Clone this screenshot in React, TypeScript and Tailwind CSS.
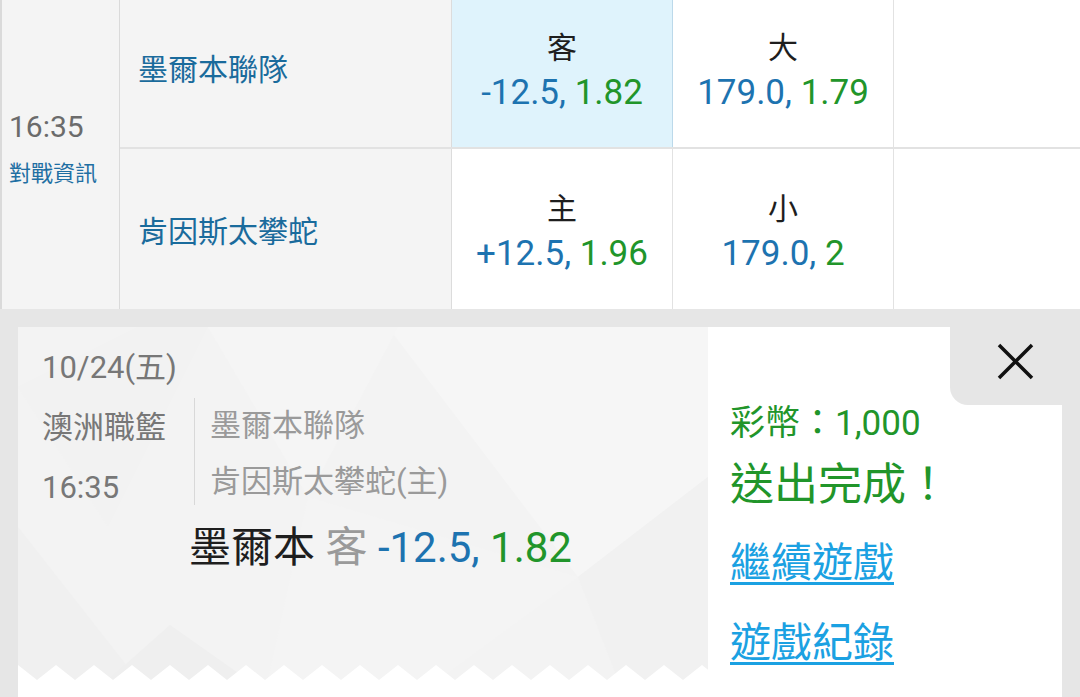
import React from "react";

type OddsCell = {
  label: string;
  line: string;
  odds: string;
  selected?: boolean;
};

type MatchRow = {
  team: string;
  cells: OddsCell[];
};

const rows: MatchRow[] = [
  {
    team: "墨爾本聯隊",
    cells: [
      { label: "客", line: "-12.5,", odds: "1.82", selected: true },
      { label: "大", line: "179.0,", odds: "1.79" },
    ],
  },
  {
    team: "肯因斯太攀蛇",
    cells: [
      { label: "主", line: "+12.5,", odds: "1.96" },
      { label: "小", line: "179.0,", odds: "2" },
    ],
  },
];

// zigzag edge along the bottom of the ticket
const zigzag = (() => {
  const w = 690;
  const h = 353;
  let d = `M0,${h} L0,${h - 15}`;
  for (let x = 0; x < w; x += 38) {
    d += ` L${x + 19},${h} L${x + 38},${h - 15}`;
  }
  d += ` L${w},${h} Z`;
  return d;
})();

const TicketBackground: React.FC = () => (
  <svg
    className="absolute inset-0"
    width="690"
    height="353"
    viewBox="0 0 690 353"
  >
    <rect width="690" height="353" fill="#f3f3f3" />
    <polygon points="370,0 690,0 690,150 560,250" fill="#f6f6f6" />
    <polygon points="190,0 380,0 290,170" fill="#f5f5f5" />
    <polygon points="0,60 120,0 190,0 90,200" fill="#f2f2f2" />
    <polygon points="0,200 120,353 0,353" fill="#f0f0f0" />
    <polygon points="90,353 152,298 230,353" fill="#efefef" />
    <polygon points="290,170 560,250 420,353 250,353" fill="#f4f4f4" />
    <polygon points="560,250 690,150 690,353 600,353" fill="#f1f1f1" />
    <path d={zigzag} fill="#ffffff" />
  </svg>
);

const App: React.FC = () => {
  return (
    <div className="w-[1080px] h-[697px] overflow-hidden bg-[#e6e6e6] font-['Roboto','Noto_Sans_CJK_TC',sans-serif]">
      {/* odds table (scrolled slightly) */}
      <div className="h-[309px] overflow-hidden">
        <div className="flex h-[321px] -mt-[12px]">
          <div className="w-[120px] shrink-0 bg-[#f4f4f4] border-l-2 border-r border-[#dadada] flex flex-col justify-center pl-[7px]">
            <div className="text-[30px] leading-[36px] text-[#6b6b6b]">16:35</div>
            <div className="mt-[14px] text-[22px] leading-[30px] text-[#1f6fa3]">對戰資訊</div>
          </div>

          <div className="flex-1 flex flex-col">
            {rows.map((row, i) => (
              <div
                key={row.team}
                className={`flex ${i === 0 ? "h-[161px] border-b-2 border-[#e2e2e2]" : "h-[160px]"}`}
              >
                <div className="w-[332px] shrink-0 bg-[#f4f4f4] border-r border-[#dcdcdc] flex items-center pl-[18px] pt-[4px] text-[30px] text-[#1a6b9c]">
                  {row.team}
                </div>
                {row.cells.map((c) => (
                  <div
                    key={c.label}
                    className={`w-[221px] shrink-0 flex flex-col items-center justify-center pt-[8px] border-r ${
                      c.selected ? "bg-[#dff3fc] border-[#bcd9ea]" : "bg-white border-[#e2e2e2]"
                    }`}
                  >
                    <div className="text-[30px] leading-[36px] text-[#1e1e1e]">{c.label}</div>
                    <div className="mt-[6px] text-[35px] leading-[42px]">
                      <span className="text-[#1d73b0]">{c.line}</span>{" "}
                      <span className="text-[#21952a]">{c.odds}</span>
                    </div>
                  </div>
                ))}
                <div className="flex-1 bg-white" />
              </div>
            ))}
          </div>
        </div>
      </div>

      {/* bet receipt */}
      <div className="pt-[18px] px-[18px]">
        <div className="flex h-[370px] bg-white">
          <div className="relative w-[690px] h-[353px] shrink-0 overflow-hidden">
            <TicketBackground />
            <div className="relative pl-[24px] pt-[21px]">
              <div className="text-[31px] leading-[40px] text-[#777]">10/24(五)</div>
              <div className="mt-[10px] flex items-start">
                <div className="w-[152px] pt-[10px] flex flex-col gap-[20px] text-[31px] leading-[40px] text-[#777]">
                  <span>澳洲職籃</span>
                  <span>16:35</span>
                </div>
                <div className="border-l border-[#d8d8d8] pl-[15px] pt-[8px] pb-[3px] flex flex-col gap-[16px] text-[31px] leading-[40px] text-[#9a9a9a]">
                  <span>墨爾本聯隊</span>
                  <span>肯因斯太攀蛇(主)</span>
                </div>
              </div>
              <div className="mt-[15px] pl-[147px] text-[42px] leading-[50px] whitespace-nowrap">
                <span className="text-[#1e1e1e]">墨爾本</span>{" "}
                <span className="text-[#9a9a9a]">客</span>{" "}
                <span className="text-[#1d73b0]">-12.5,</span>{" "}
                <span className="text-[#21952a]">1.82</span>
              </div>
            </div>
          </div>

          <div className="flex-1 flex flex-col">
            <div className="flex justify-end">
              <button className="w-[112px] h-[78px] bg-[#e6e6e6] rounded-bl-[18px] pl-[47px] pt-[16px] flex items-start">
                <svg width="37" height="37" viewBox="0 0 37 37">
                  <path d="M2 2 L35 35 M35 2 L2 35" stroke="#111" strokeWidth="3.5" />
                </svg>
              </button>
            </div>
            <div className="pl-[22px]">
              <div className="text-[35px] leading-[38px] text-[#21952a]">彩幣：1,000</div>
              <div className="mt-[14px] text-[44px] leading-[56px] text-[#21952a]">送出完成！</div>
              <div className="mt-[24px] text-[41px] leading-[52px] text-[#1ba1e2] underline decoration-[3px] underline-offset-[5px]">
                繼續遊戲
              </div>
              <div className="mt-[28px] text-[41px] leading-[52px] text-[#1ba1e2] underline decoration-[3px] underline-offset-[5px]">
                遊戲紀錄
              </div>
            </div>
          </div>
        </div>
      </div>
    </div>
  );
};

export default App;
